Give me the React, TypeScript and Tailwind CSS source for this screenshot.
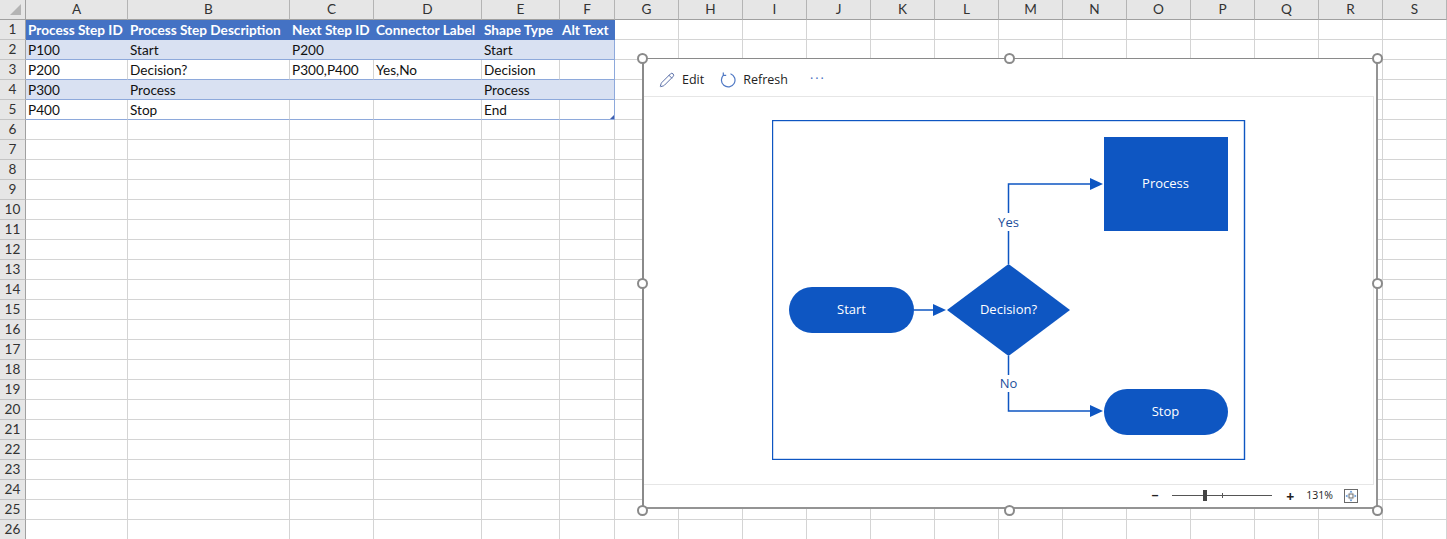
import { Pencil } from 'lucide-react';

const columns = ['A', 'B', 'C', 'D', 'E', 'F', 'G', 'H', 'I', 'J', 'K', 'L', 'M', 'N', 'O', 'P', 'Q', 'R', 'S'];
const tableCols = 6;
const gridCols = 'grid grid-cols-[26px_102px_162px_84px_108px_78px_55px_64px_64px_64px_64px_64px_64px_64px_64px_64px_64px_64px_64px_64px]';

const tableRows = [
	['Process Step ID', 'Process Step Description', 'Next Step ID', 'Connector Label', 'Shape Type', 'Alt Text'],
	['P100', 'Start', 'P200', '', 'Start', ''],
	['P200', 'Decision?', 'P300,P400', 'Yes,No', 'Decision', ''],
	['P300', 'Process', '', '', 'Process', ''],
	['P400', 'Stop', '', '', 'End', ''],
];

const rowNumbers = Array.from({ length: 26 }, (_, i) => i + 1);

function cellClass(row: number, col: number) {
	if (col >= tableCols || row >= tableRows.length) return 'border-r border-b border-[#d4d4d4]';
	const edge = col === tableCols - 1 ? 'border-r border-r-[#8ea9db]' : '';
	if (row === 0) return `bg-[#4472c4] font-bold text-white ${col === tableCols - 1 ? 'border-r border-r-[#4472c4]' : ''}`;
	if (row % 2 === 1) return `bg-[#d9e1f2] border-b border-b-[#8ea9db] text-[#111] ${edge}`;
	return `border-b border-b-[#8ea9db] text-[#111] ${edge || 'border-r border-r-[#d4d4d4]'}`;
}

function Sheet() {
	return (
		<div className="font-['Lato',sans-serif] text-[13.6px]">
			<div className={gridCols}>
				<div className="flex h-5 items-center justify-end border-r border-b border-[#a0a0a0] bg-[#e6e6e6] pr-[4px]">
					<div className="h-0 w-0 border-b-[11px] border-l-[11px] border-b-[#b4b4b4] border-l-transparent" />
				</div>
				{columns.map((col) => (
					<div
						key={col}
						className="flex h-5 items-center justify-center border-r border-b border-r-[#b4b4b4] border-b-[#a0a0a0] bg-[#e6e6e6] text-[#333]"
					>
						{col}
					</div>
				))}
			</div>
			{rowNumbers.map((num, row) => (
				<div key={num} className={gridCols}>
					<div className="flex h-5 items-center justify-center border-r border-b border-r-[#a0a0a0] border-b-[#c4c4c4] bg-[#e6e6e6] text-[#333]">
						{num}
					</div>
					{columns.map((col, index) => (
						<div
							key={col}
							className={`h-5 overflow-visible whitespace-nowrap pl-[2px] leading-[20px] ${cellClass(row, index)}`}
						>
							{tableRows[row]?.[index] ?? ''}
						</div>
					))}
				</div>
			))}
		</div>
	);
}

function Handle({ className }: { className: string }) {
	return (
		<div
			className={`absolute h-[11px] w-[11px] rounded-full border-2 border-[#8a8a8a] bg-white ${className}`}
		/>
	);
}

function Flowchart() {
	const blue = '#0e56c2';
	return (
		<svg width="474" height="340" viewBox="772 120 474 340" className="block">
			<rect x="772.5" y="120.5" width="472" height="339" fill="white" stroke={blue} strokeWidth="1.4" />

			<rect x="789" y="287" width="125" height="46" rx="23" fill={blue} />
			<polygon points="947,310 1008.5,264 1070,310 1008.5,356" fill={blue} />
			<rect x="1104" y="137" width="124" height="94" fill={blue} />
			<rect x="1104" y="389" width="124" height="46" rx="23" fill={blue} />

			<g stroke={blue} strokeWidth="1.5" fill="none">
				<path d="M914 310H934" />
				<path d="M1008.5 264V184H1091" />
				<path d="M1008.5 356V411H1091" />
			</g>
			<g fill={blue}>
				<polygon points="933,304 946,310 933,316" />
				<polygon points="1090,178 1103,184 1090,190" />
				<polygon points="1090,405 1103,411 1090,417" />
			</g>

			<rect x="996" y="213" width="25" height="18" fill="white" />
			<rect x="996" y="375" width="25" height="17" fill="white" />
			<g fontFamily="'Open Sans', sans-serif" fontSize="13" textAnchor="middle">
				<text x="1008.5" y="227" fill="#1c4f9c">Yes</text>
				<text x="1008.5" y="388" fill="#1c4f9c">No</text>
				<text x="851.5" y="314" fill="white">Start</text>
				<text x="1008.5" y="314" fill="white">Decision?</text>
				<text x="1165.5" y="188" fill="white">Process</text>
				<text x="1165.5" y="416" fill="white">Stop</text>
			</g>
		</svg>
	);
}

function RefreshIcon() {
	return (
		<svg width="16" height="16" viewBox="0 0 16 16" fill="none" stroke="#4f78c4" strokeWidth="1.2">
			<path d="M10.5 1.7A6.8 6.8 0 1 1 3.8 2.9" />
			<path d="M3.3 0.4V3.4H6.2" />
		</svg>
	);
}

function FitIcon() {
	return (
		<svg width="14" height="14" viewBox="0 0 14 14" fill="none">
			<rect x="0.5" y="0.5" width="13" height="13" stroke="#6a6a6a" />
			<rect x="5" y="5" width="4" height="4" stroke="#6a6a6a" />
			<path d="M7 1.5 8.5 3.5H5.5ZM7 12.5 5.5 10.5H8.5ZM1.5 7 3.5 5.5V8.5ZM12.5 7 10.5 8.5V5.5Z" fill="#4f8ad0" />
		</svg>
	);
}

function ZoomSlider() {
	return (
		<div className="relative h-[12px] w-[100px]">
			<div className="absolute top-[5px] left-0 h-px w-full bg-[#555]" />
			<div className="absolute top-[3px] left-[50px] h-[5px] w-px bg-[#555]" />
			<div className="absolute top-0 left-[31px] h-[11px] w-[4px] bg-[#444]" />
		</div>
	);
}

function DiagramWindow() {
	return (
		<div className="absolute top-[58px] left-[642px] h-[451px] w-[736px]">
			<div className="flex h-full w-full flex-col border-t border-r-2 border-b-2 border-l-2 border-t-[#8a8a8a] border-r-[#949494] border-b-[#949494] border-l-[#8a8a8a] bg-white font-['Open_Sans',sans-serif] text-[12.5px] text-[#222]">
				<div className="mr-[2px] flex h-[38px] items-center gap-[16px] border-b border-[#e6e6e6] pt-[5px] pl-[15px]">
					<div className="flex items-center gap-[7px]">
						<Pencil size={16} strokeWidth={1.5} color="#5a6fa8" />
						<span>Edit</span>
					</div>
					<div className="flex items-center gap-[7px]">
						<RefreshIcon />
						<span>Refresh</span>
					</div>
					<span className="ml-[6px] pb-[9px] tracking-[2px] text-[#3f6cc0]">...</span>
				</div>
				<div className="mr-[2px] flex flex-1 items-center justify-center border-r border-[#e6e6e6] pt-[1px] pb-[2px]">
					<Flowchart />
				</div>
				<div className="mr-[2px] flex h-[23px] items-center justify-end border-t border-[#e6e6e6] pr-[16px]">
					<span className="mr-[14px] font-bold">−</span>
					<ZoomSlider />
					<span className="ml-[14px] text-[14px] font-bold">+</span>
					<span className="ml-[12px] text-[10.5px]">131%</span>
					<span className="ml-[11px]">
						<FitIcon />
					</span>
				</div>
			</div>
			<Handle className="top-[-5px] left-[-5px]" />
			<Handle className="top-[-5px] left-[362px]" />
			<Handle className="top-[-5px] right-[-5px]" />
			<Handle className="top-[220px] left-[-5px]" />
			<Handle className="top-[220px] right-[-5px]" />
			<Handle className="bottom-[-7px] left-[-5px]" />
			<Handle className="bottom-[-7px] left-[362px]" />
			<Handle className="right-[-5px] bottom-[-7px]" />
		</div>
	);
}

export default function App() {
	return (
		<div className="relative h-[539px] w-[1447px] overflow-hidden bg-white">
			<Sheet />
			<div className="absolute top-[115px] left-[610px] h-0 w-0 border-b-[4px] border-l-[4px] border-b-[#3f5fb0] border-l-transparent" />
			<DiagramWindow />
		</div>
	);
}
